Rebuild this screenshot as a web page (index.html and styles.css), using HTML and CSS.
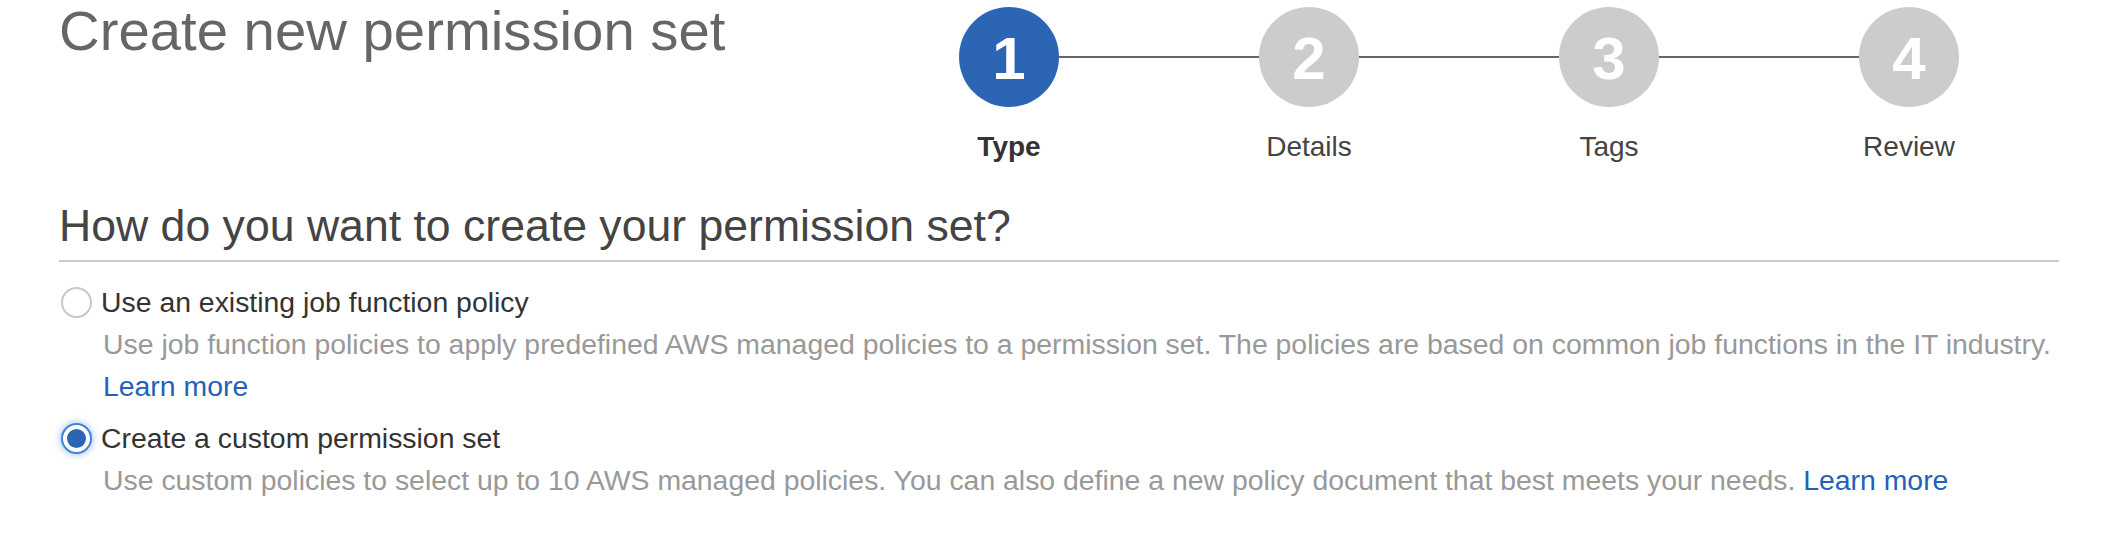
FILE: index.html
```html
<!DOCTYPE html>
<html lang="en">
<head>
<meta charset="utf-8">
<title>Create new permission set</title>
<link rel="stylesheet" href="styles.css">
</head>
<body>
<div class="page">
  <div class="header">
    <h1 class="title">Create new permission set</h1>
    <ol class="stepper">
      <li class="step active"><span class="circle">1</span><span class="step-label">Type</span></li>
      <li class="step"><span class="circle">2</span><span class="step-label">Details</span></li>
      <li class="step"><span class="circle">3</span><span class="step-label">Tags</span></li>
      <li class="step"><span class="circle">4</span><span class="step-label">Review</span></li>
    </ol>
  </div>
  <h2 class="section-title">How do you want to create your permission set?</h2>
  <div class="options">
    <div class="option">
      <span class="radio"></span>
      <span class="option-label">Use an existing job function policy</span>
      <p class="option-desc">Use job function policies to apply predefined AWS managed policies to a permission set. The policies are based on common job functions in the IT industry.<br><a class="link" href="#">Learn more</a></p>
    </div>
    <div class="option">
      <span class="radio checked"></span>
      <span class="option-label">Create a custom permission set</span>
      <p class="option-desc">Use custom policies to select up to 10 AWS managed policies. You can also define a new policy document that best meets your needs. <a class="link" href="#">Learn more</a></p>
    </div>
  </div>
</div>
</body>
</html>
```

FILE: styles.css
```css
* { box-sizing: border-box; }

body {
  margin: 0;
  background: #ffffff;
  font-family: "Liberation Sans", Arial, Helvetica, sans-serif;
  color: #444444;
}

.page {
  padding: 0 49px 0 59px;
}

.header {
  display: flex;
  justify-content: space-between;
  align-items: flex-start;
}

.title {
  margin: 0;
  padding-top: 3px;
  font-size: 56.3px;
  line-height: 56px;
  font-weight: normal;
  color: #666666;
}

.stepper {
  list-style: none;
  margin: 0;
  padding: 7px 0 0 0;
  display: grid;
  grid-template-columns: repeat(4, 300px);
}

.step {
  position: relative;
  display: flex;
  flex-direction: column;
  align-items: center;
}

.step:not(:last-child)::after {
  content: "";
  position: absolute;
  top: 49px;
  left: calc(50% + 50px);
  width: 200px;
  height: 2px;
  background: #666666;
}

.circle {
  width: 100px;
  height: 100px;
  border-radius: 50%;
  background: #cccccc;
  color: #ffffff;
  display: flex;
  align-items: center;
  justify-content: center;
  padding-top: 4px;
  font-size: 60px;
  line-height: 60px;
  font-weight: bold;
}

.step.active .circle {
  background: #2d65b5;
}

.step-label {
  margin-top: 23px;
  font-size: 28px;
  line-height: 34px;
  color: #444444;
}

.step.active .step-label {
  font-weight: bold;
  color: #333333;
}

.section-title {
  margin: 36px 0 0 0;
  font-size: 44.6px;
  line-height: 52px;
  font-weight: normal;
  color: #444444;
  padding-bottom: 8px;
  border-bottom: 2px solid #cccccc;
}

.options {
  margin-top: 19px;
  display: flex;
  flex-direction: column;
  gap: 10px;
}

.option {
  display: grid;
  grid-template-columns: 42px 1fr;
  font-size: 28.4px;
  line-height: 42px;
}

.radio {
  grid-column: 1;
  grid-row: 1;
  align-self: center;
  margin-left: 2px;
  width: 31px;
  height: 31px;
  border-radius: 50%;
  border: 2px solid #c8c8c8;
  background: #ffffff;
}

.radio.checked {
  border-color: #3f84d8;
  padding: 4px;
  background: #2d65b5;
  background-clip: content-box;
  box-shadow: 0 0 7px 1px rgba(63, 132, 216, 0.45);
}

.option-label {
  grid-column: 2;
  grid-row: 1;
  color: #333333;
}

.option-desc {
  grid-column: 2;
  grid-row: 2;
  margin: 0;
  padding-left: 2px;
  color: #999999;
}

.link {
  color: #2461b8;
  text-decoration: none;
}
```
